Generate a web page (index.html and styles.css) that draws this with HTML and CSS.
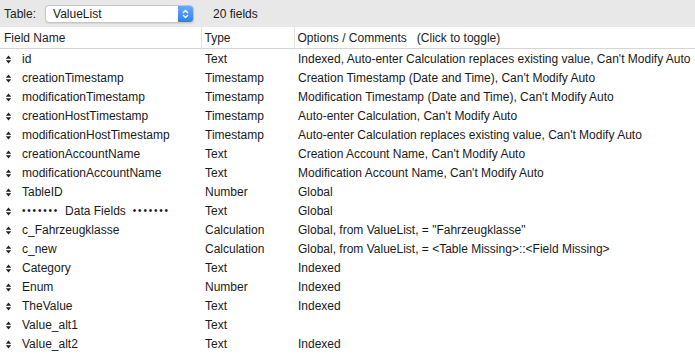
FILE: index.html
```html
<!DOCTYPE html>
<html>
<head>
<meta charset="UTF-8">
<title>Fields</title>
<link rel="stylesheet" href="styles.css">
</head>
<body>
<div class="toolbar">
  <span class="label">Table:</span>
  <div class="popup">
    <span class="popup-text">ValueList</span>
    <span class="stepper">
      <svg width="7" height="10" viewBox="0 0 7 10"><path d="M1 4 L3.5 1.5 L6 4 M1 6 L3.5 8.5 L6 6" fill="none" stroke="#fff" stroke-width="1.3"/></svg>
    </span>
  </div>
  <span class="count">20 fields</span>
</div>
<table class="fields">
  <thead>
    <tr>
      <th class="c-name">Field Name</th>
      <th class="c-type">Type</th>
      <th class="c-opt">Options / Comments&nbsp;&nbsp;&nbsp;(Click to toggle)</th>
    </tr>
  </thead>
  <tbody id="rows"></tbody>
</table>
<script>
  var dots = "<span class='dots'>\u2022\u2022\u2022\u2022\u2022\u2022\u2022</span>";
  var fields = [
    ["id", "Text", "Indexed, Auto-enter Calculation replaces existing value, Can't Modify Auto"],
    ["creationTimestamp", "Timestamp", "Creation Timestamp (Date and Time), Can't Modify Auto"],
    ["modificationTimestamp", "Timestamp", "Modification Timestamp (Date and Time), Can't Modify Auto"],
    ["creationHostTimestamp", "Timestamp", "Auto-enter Calculation, Can't Modify Auto"],
    ["modificationHostTimestamp", "Timestamp", "Auto-enter Calculation replaces existing value, Can't Modify Auto"],
    ["creationAccountName", "Text", "Creation Account Name, Can't Modify Auto"],
    ["modificationAccountName", "Text", "Modification Account Name, Can't Modify Auto"],
    ["TableID", "Number", "Global"],
    [null, "Text", "Global"],
    ["c_Fahrzeugklasse", "Calculation", "Global, from ValueList, = \"Fahrzeugklasse\""],
    ["c_new", "Calculation", "Global, from ValueList, = <Table Missing>::<Field Missing>"],
    ["Category", "Text", "Indexed"],
    ["Enum", "Number", "Indexed"],
    ["TheValue", "Text", "Indexed"],
    ["Value_alt1", "Text", ""],
    ["Value_alt2", "Text", "Indexed"]
  ];
  function esc(s) {
    return s.replace(/&/g, "&amp;").replace(/</g, "&lt;").replace(/>/g, "&gt;");
  }
  var arrows = '<svg class="grip" width="7" height="9" viewBox="0 0 7 9"><path d="M3.5 0.5 L6.2 3.7 L0.8 3.7 Z M3.5 8.5 L6.2 5.3 L0.8 5.3 Z" fill="#222"/></svg>';
  var out = "";
  for (var i = 0; i < fields.length; i++) {
    var f = fields[i];
    var name = f[0] === null ? dots + "<span class='sep'>Data Fields</span>" + dots : esc(f[0]);
    out += "<tr><td class='c-name'>" + arrows + "<span class='name'>" + name + "</span></td>"
      + "<td class='c-type'>" + f[1] + "</td>"
      + "<td class='c-opt'>" + esc(f[2]) + "</td></tr>";
  }
  document.getElementById("rows").innerHTML = out;
</script>
</body>
</html>
```

FILE: styles.css
```css
body {
  margin: 0;
  width: 695px;
  height: 354px;
  overflow: hidden;
  font-family: "Liberation Sans", Arial, sans-serif;
  font-size: 12px;
  color: #1a1a1a;
  background: #fff;
}
.toolbar {
  height: 27px;
  background: #e8e8e8;
  display: flex;
  align-items: center;
  padding-left: 4px;
}
.label {
  color: #222;
}
.popup {
  margin-left: 9px;
  width: 149px;
  height: 18px;
  background: #fff;
  border: 1px solid #c4c4c4;
  border-radius: 4px;
  display: flex;
  align-items: center;
  box-sizing: border-box;
  justify-content: space-between;
  box-shadow: 0 1px 1px rgba(0,0,0,0.08);
}
.popup-text {
  padding-left: 7px;
}
.stepper {
  width: 15px;
  height: 16px;
  background: linear-gradient(#6aa9f7, #2f7ff0);
  border-radius: 0 3px 3px 0;
  display: flex;
  align-items: center;
  justify-content: center;
}
.count {
  margin-left: 19px;
}
table.fields {
  border-collapse: collapse;
  border-spacing: 0;
  width: 695px;
}
th {
  font-weight: normal;
  text-align: left;
  height: 21px;
  padding: 0;
  color: #222;
  border-bottom: 1px solid #d5d5d5;
}
th.c-name {
  padding-left: 4px;
}
th.c-type, th.c-opt {
  border-left: 1px solid #e2e2e2;
  padding-left: 3px;
}
td {
  height: 19px;
  padding: 0;
  white-space: nowrap;
}
td.c-name {
  width: 197px;
  padding-left: 4px;
}
td.c-type {
  width: 89px;
  padding-left: 4px;
}
td.c-opt {
  padding-left: 4px;
}
.grip {
  vertical-align: -1px;
  margin-left: 1px;
}
.name {
  margin-left: 10px;
}
.dots {
  font-size: 10px;
  letter-spacing: 1.8px;
  vertical-align: 1px;
}
.sep {
  margin: 0 7px 0 6px;
}
```
